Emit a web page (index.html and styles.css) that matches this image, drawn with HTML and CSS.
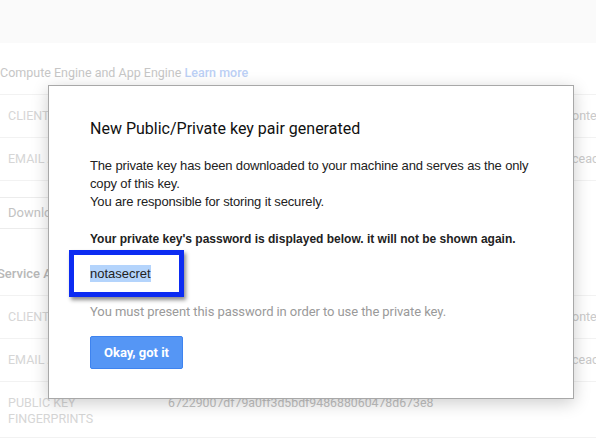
FILE: index.html
```html
<!DOCTYPE html>
<html lang="en">
<head>
<meta charset="utf-8">
<title>Credentials</title>
<link rel="stylesheet" href="styles.css">
</head>
<body>
<div class="page">
  <div class="topbar"></div>
  <p class="intro">Compute Engine and App Engine <a class="link">Learn more</a></p>
  <div class="table">
    <div class="row"><div class="label">Client ID</div><div class="value"><span class="head">588219416405-3ahcnb4l0u9rkt5.apps.googleuserc</span><span>ontent.com</span></div></div>
    <div class="row"><div class="label">Email address</div><div class="value"><span class="head">588219416405-3ahcnb4l0u9@developer.gservi</span><span>ceaccount.com</span></div></div>
  </div>
  <div class="dl-btn">Download JSON</div>
  <h2 class="section-title">Service Account</h2>
  <div class="table">
    <div class="row"><div class="label">Client ID</div><div class="value"><span class="head">588219416405-3ahcnb4l0u9rkt5.apps.googleuserc</span><span>ontent.com</span></div></div>
    <div class="row"><div class="label">Email address</div><div class="value"><span class="head">588219416405-3ahcnb4l0u9@developer.gservi</span><span>ceaccount.com</span></div></div>
    <div class="row row-tall"><div class="label">Public key fingerprints</div><div class="value fp">67229007df79a0ff3d5bdf948688060478d673e8</div></div>
  </div>
</div>

<div class="dialog">
  <h1 class="dlg-title">New Public/Private key pair generated</h1>
  <p class="dlg-text">The private key has been downloaded to your machine and serves as the only copy of this key.<br>You are responsible for storing it securely.</p>
  <p class="dlg-bold">Your private key's password is displayed below. it will not be shown again.</p>
  <p class="dlg-pass"><span class="sel">notasecret</span></p>
  <p class="dlg-note">You must present this password in order to use the private key.</p>
  <button class="dlg-btn">Okay, got it</button>
  <div class="callout"></div>
</div>
</body>
</html>
```
FILE: styles.css
```css
html, body {
  margin: 0;
  padding: 0;
  background: #ffffff;
}
body {
  width: 596px;
  height: 438px;
  overflow: hidden;
  position: relative;
  font-family: Roboto, "Liberation Sans", Arial, sans-serif;
}
.page {
  width: 596px;
}
.topbar {
  height: 43px;
  background: #fafafa;
}
.intro {
  margin: 0 0 13px 0;
  padding-top: 22px;
  font-size: 12.5px;
  line-height: 16px;
  color: #c6c6c6;
}
.link {
  color: #bcd0f5;
  font-weight: 500;
}
.table {
  border-bottom: 1px solid #f2f2f2;
}
.row {
  display: flex;
  align-items: center;
  height: 42px;
  border-top: 1px solid #f2f2f2;
}
.row-tall {
  align-items: flex-start;
  height: 56px;
  padding-top: 13px;
  box-sizing: border-box;
}
.label {
  width: 102px;
  flex: none;
  padding: 0 58px 0 8px;
  font-size: 12.5px;
  line-height: 16px;
  text-transform: uppercase;
  color: #d6d6d6;
}
.value {
  flex: 1;
  min-width: 0;
  overflow: hidden;
  white-space: nowrap;
  font-size: 12.5px;
  line-height: 16px;
  color: #cacaca;
}
.head {
  display: inline-block;
  width: 404px;
  overflow: hidden;
  vertical-align: top;
}
.fp {
  color: #c2c2c2;
  font-size: 12.3px;
}
.dl-btn {
  margin: 16px 0 0 -1px;
  width: 140px;
  height: 30px;
  line-height: 30px;
  border: 1px solid #ececec;
  padding-left: 8px;
  font-size: 13px;
  color: #c2c2c2;
}
.section-title {
  margin: 35px 0 11px -3px;
  font-size: 13px;
  line-height: 20px;
  font-weight: 500;
  color: #b8b8b8;
}

.dialog {
  position: absolute;
  left: 48px;
  top: 85px;
  width: 483px;
  padding: 33px 0 29px 41px;
  background: #ffffff;
  border: 1px solid #a8a8a8;
  box-shadow: 0 4px 16px rgba(0, 0, 0, 0.2);
  font-family: "Liberation Sans", Arial, sans-serif;
  color: #222222;
}
.dlg-title {
  margin: 0;
  font-family: Roboto, "Liberation Sans", Arial, sans-serif;
  font-size: 16px;
  line-height: 20px;
  font-weight: 400;
  color: #111111;
}
.dlg-text {
  margin: 18px 0 0 0;
  max-width: 455px;
  font-size: 13px;
  letter-spacing: -0.15px;
  line-height: 18px;
}
.dlg-bold {
  margin: 19px 0 0 0;
  font-size: 12px;
  line-height: 18px;
  font-weight: 700;
}
.dlg-pass {
  margin: 17px 0 0 0;
  font-size: 13px;
  line-height: 18px;
}
.sel {
  background: #b4d4fc;
  padding: 1px 0;
}
.dlg-note {
  margin: 20px 0 0 0;
  font-family: Roboto, "Liberation Sans", Arial, sans-serif;
  font-size: 13px;
  letter-spacing: -0.08px;
  line-height: 18px;
  color: #9a9a9a;
}
.dlg-btn {
  display: block;
  margin-top: 15px;
  width: 93px;
  height: 33px;
  padding: 0;
  background: #5596f5;
  border: 1px solid #3e83ef;
  border-radius: 2px;
  font-family: Roboto, "Liberation Sans", Arial, sans-serif;
  font-size: 13px;
  font-weight: 700;
  color: #ffffff;
}
.callout {
  position: absolute;
  left: 20px;
  top: 164px;
  width: 115px;
  height: 47px;
  box-sizing: border-box;
  border: 5px solid #0c2cf2;
  box-shadow: 2px 3px 4px rgba(0, 0, 0, 0.45);
}
```
